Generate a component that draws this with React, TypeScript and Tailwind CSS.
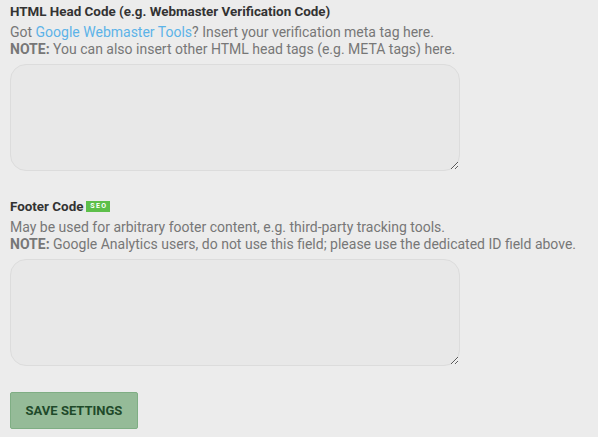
import React from "react";

export default function App() {
  return (
    <div className="w-[598px] h-[437px] bg-[#ececec] px-[10px] pt-[3px] text-[14px] leading-[17px] text-[#777777]" style={{ fontFamily: "Roboto, 'Liberation Sans', sans-serif" }}>
      <div className="font-bold text-[13.4px] text-[#333333]">HTML Head Code (e.g. Webmaster Verification Code)</div>
      <div className="mt-[4px]">
        Got <a className="text-[#5cb3e8]">Google Webmaster Tools</a>? Insert your verification meta tag here.
      </div>
      <div>
        <span className="font-bold">NOTE:</span> You can also insert other HTML head tags (e.g. META tags) here.
      </div>
      <textarea className="block mt-[6px] w-[450px] h-[107px] rounded-[16px] border border-[#dcdcdc] bg-[#e8e8e8] outline-none" />

      <div className="mt-[27px] flex items-center font-bold text-[13.4px] text-[#333333]">
        Footer Code
        <span className="ml-[3px] inline-flex items-center justify-center h-[11px] w-[24px] bg-[#5dbf4a] text-white text-[7px] leading-none tracking-[1.5px] font-bold pl-[1px]">SEO</span>
      </div>
      <div className="mt-[4px]">May be used for arbitrary footer content, e.g. third-party tracking tools.</div>
      <div>
        <span className="font-bold">NOTE:</span> Google Analytics users, do not use this field; please use the dedicated ID field above.
      </div>
      <textarea className="block mt-[6px] w-[450px] h-[107px] rounded-[16px] border border-[#dcdcdc] bg-[#e8e8e8] outline-none" />

      <button className="mt-[26px] block w-[128px] h-[37px] rounded-[2px] border border-[#7fae84] bg-[#95bb98] text-[#1f4a2a] font-bold text-[13px] uppercase">
        Save Settings
      </button>
    </div>
  );
}
